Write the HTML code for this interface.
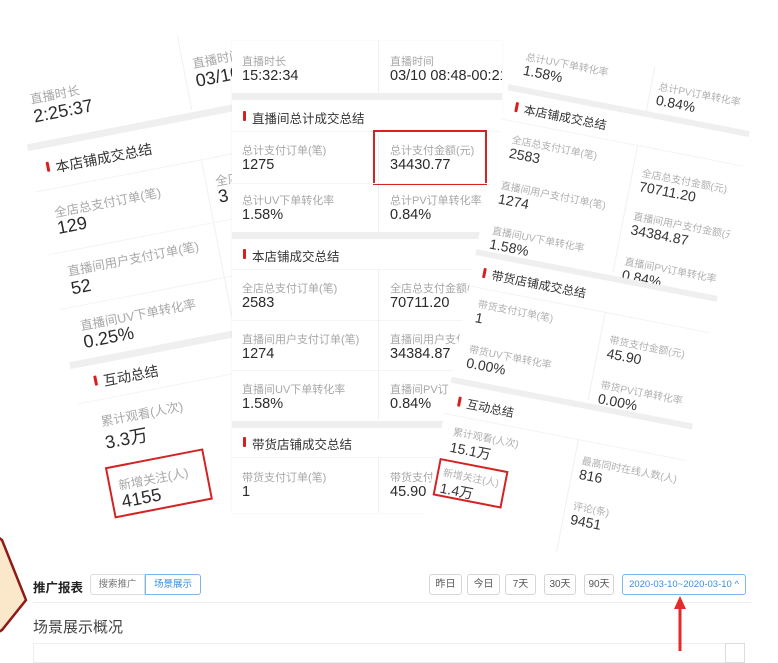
<!DOCTYPE html>
<html><head><meta charset="utf-8"><style>
*{margin:0;padding:0;box-sizing:border-box}
body{width:778px;height:651px;overflow:hidden;background:#fff;font-family:"Liberation Sans","Noto Sans CJK SC",sans-serif;position:relative}
.card{position:absolute;background:#fff;overflow:hidden}
.card *{position:absolute;white-space:nowrap}
.l{color:#a8a8a8;font-size:11px}
.v{color:#2a2a2a;font-size:14.5px}
.h{color:#333;font-size:12.5px}
.h:before{content:"";position:absolute;left:-9px;top:3px;width:3px;height:10px;background:#d81e1e;border-radius:1px}
.bar{background:#efefef;height:7px;left:0;right:0}
.vl{background:#f0f0f0;width:1px}
.hl{background:#f4f4f4;height:1px}
.rb{border:2px solid #d42323}
.big .l{font-size:12.5px}
.big .v{font-size:18px}
.big .h{font-size:14px}
.sm .l{font-size:10px;color:#b0b0b0}
.sm .v{font-size:14px;color:#333}
.sm .h{font-size:12px}
.btn{position:absolute;top:574px;height:21px;border:1px solid #d6d6d6;border-radius:3px;font-size:10px;color:#555;text-align:center;line-height:19px}
</style></head><body>

<!-- left card -->
<div class="card big" style="left:10px;top:58px;width:262px;height:480px;transform:rotate(-11deg);transform-origin:0 0">
  <div class="l" style="left:12px;top:34px">直播时长</div>
  <div class="v" style="left:12px;top:52px">2:25:37</div>
  <div class="vl" style="left:168px;top:10px;height:75px"></div>
  <div class="l" style="left:178px;top:30px">直播时间</div>
  <div class="v" style="left:178px;top:48px">03/10 08:48</div>
  <div class="bar" style="top:88px"></div>
  <div class="h" style="left:24px;top:106px">本店铺成交总结</div>
  <div class="hl" style="left:0;right:0;top:136px"></div>
  <div class="vl" style="left:168px;top:136px;height:170px"></div>
  <div class="l" style="left:14px;top:150px">全店总支付订单(笔)</div>
  <div class="v" style="left:14px;top:166px">129</div>
  <div class="l" style="left:178px;top:150px">全店总支付金额</div>
  <div class="v" style="left:178px;top:166px">3</div>
  <div class="l" style="left:16px;top:210px">直播间用户支付订单(笔)</div>
  <div class="v" style="left:16px;top:228px">52</div>
  <div class="hl" style="left:0;right:0;top:200px"></div>
  <div class="hl" style="left:0;right:0;top:256px"></div>
  <div class="l" style="left:18px;top:266px">直播间UV下单转化率</div>
  <div class="v" style="left:18px;top:283px">0.25%</div>
  <div class="bar" style="top:310px"></div>
  <div class="h" style="left:30px;top:325px">互动总结</div>
  <div class="hl" style="left:0;right:0;top:352px"></div>
  <div class="l" style="left:20px;top:364px">累计观看(人次)</div>
  <div class="v" style="left:20px;top:382px">3.3万</div>
  <div class="rb" style="left:15px;top:420px;width:100px;height:52px"></div>
  <div class="l" style="left:25px;top:430px">新增关注(人)</div>
  <div class="v" style="left:25px;top:447px">4155</div>
</div>

<!-- middle card -->
<div class="card" style="left:232px;top:41px;width:270px;height:472px;box-shadow:0 0 3px rgba(0,0,0,.05)">
  <div class="l" style="left:10px;top:12px">直播时长</div>
  <div class="v" style="left:10px;top:27px">15:32:34</div>
  <div class="vl" style="left:146px;top:0;height:52px"></div>
  <div class="l" style="left:158px;top:12px">直播时间</div>
  <div class="v" style="left:158px;top:27px">03/10 08:48-00:21</div>
  <div class="bar" style="top:52px"></div>
  <div class="h" style="left:20px;top:67px">直播间总计成交总结</div>
  <div class="hl" style="left:0;right:0;top:90px"></div>
  <div class="vl" style="left:146px;top:90px;height:100px"></div>
  <div class="l" style="left:10px;top:101px">总计支付订单(笔)</div>
  <div class="v" style="left:10px;top:116px">1275</div>
  <div class="l" style="left:158px;top:101px">总计支付金额(元)</div>
  <div class="v" style="left:158px;top:116px">34430.77</div>
  <div class="rb" style="left:141px;top:89px;width:114px;height:55px"></div>
  <div class="hl" style="left:0;right:0;top:142px"></div>
  <div class="l" style="left:10px;top:151px">总计UV下单转化率</div>
  <div class="v" style="left:10px;top:166px">1.58%</div>
  <div class="l" style="left:158px;top:151px">总计PV订单转化率</div>
  <div class="v" style="left:158px;top:166px">0.84%</div>
  <div class="bar" style="top:191px"></div>
  <div class="h" style="left:20px;top:205px">本店铺成交总结</div>
  <div class="hl" style="left:0;right:0;top:228px"></div>
  <div class="vl" style="left:146px;top:228px;height:150px"></div>
  <div class="l" style="left:10px;top:239px">全店总支付订单(笔)</div>
  <div class="v" style="left:10px;top:254px">2583</div>
  <div class="l" style="left:158px;top:239px">全店总支付金额(元)</div>
  <div class="v" style="left:158px;top:254px">70711.20</div>
  <div class="hl" style="left:0;right:0;top:279px"></div>
  <div class="l" style="left:10px;top:290px">直播间用户支付订单(笔)</div>
  <div class="v" style="left:10px;top:305px">1274</div>
  <div class="l" style="left:158px;top:290px">直播间用户支付</div>
  <div class="v" style="left:158px;top:305px">34384.87</div>
  <div class="hl" style="left:0;right:0;top:329px"></div>
  <div class="l" style="left:10px;top:340px">直播间UV下单转化率</div>
  <div class="v" style="left:10px;top:355px">1.58%</div>
  <div class="l" style="left:158px;top:340px">直播间PV订单</div>
  <div class="v" style="left:158px;top:355px">0.84%</div>
  <div class="bar" style="top:380px"></div>
  <div class="h" style="left:20px;top:393px">带货店铺成交总结</div>
  <div class="hl" style="left:0;right:0;top:416px"></div>
  <div class="vl" style="left:146px;top:416px;height:60px"></div>
  <div class="l" style="left:10px;top:428px">带货支付订单(笔)</div>
  <div class="v" style="left:10px;top:443px">1</div>
  <div class="l" style="left:158px;top:428px">带货支付</div>
  <div class="v" style="left:158px;top:443px">45.90</div>
</div>

<!-- right card -->
<div class="card sm" style="left:517px;top:40px;width:246px;height:510px;transform:rotate(11deg);transform-origin:0 0">
  <div class="l" style="left:12px;top:6px">总计UV下单转化率</div>
  <div class="v" style="left:12px;top:20px">1.58%</div>
  <div class="vl" style="left:140px;top:0;height:45px"></div>
  <div class="l" style="left:148px;top:10px">总计PV订单转化率</div>
  <div class="v" style="left:148px;top:24px">0.84%</div>
  <div class="bar" style="top:45px;height:6px"></div>
  <div class="h" style="left:20px;top:58px">本店铺成交总结</div>
  <div class="hl" style="left:0;right:0;top:80px"></div>
  <div class="vl" style="left:138px;top:80px;height:130px"></div>
  <div class="l" style="left:14px;top:90px">全店总支付订单(笔)</div>
  <div class="v" style="left:14px;top:104px">2583</div>
  <div class="l" style="left:148px;top:98px">全店总支付金额(元)</div>
  <div class="v" style="left:148px;top:112px">70711.20</div>
  <div class="l" style="left:12px;top:137px">直播间用户支付订单(笔)</div>
  <div class="v" style="left:12px;top:151px">1274</div>
  <div class="l" style="left:148px;top:142px">直播间用户支付金额(元)</div>
  <div class="v" style="left:148px;top:156px">34384.87</div>
  <div class="l" style="left:12px;top:183px">直播间UV下单转化率</div>
  <div class="v" style="left:12px;top:197px">1.58%</div>
  <div class="l" style="left:148px;top:188px">直播间PV订单转化率</div>
  <div class="v" style="left:148px;top:202px">0.84%</div>
  <div class="bar" style="top:213px;height:6px"></div>
  <div class="h" style="left:20px;top:227px">带货店铺成交总结</div>
  <div class="hl" style="left:0;right:0;top:250px"></div>
  <div class="vl" style="left:138px;top:250px;height:90px"></div>
  <div class="l" style="left:12px;top:258px">带货支付订单(笔)</div>
  <div class="v" style="left:12px;top:272px">1</div>
  <div class="l" style="left:148px;top:268px">带货支付金额(元)</div>
  <div class="v" style="left:148px;top:282px">45.90</div>
  <div class="l" style="left:12px;top:304px">带货UV下单转化率</div>
  <div class="v" style="left:12px;top:318px">0.00%</div>
  <div class="l" style="left:148px;top:314px">带货PV订单转化率</div>
  <div class="v" style="left:148px;top:328px">0.00%</div>
  <div class="bar" style="top:343px;height:6px"></div>
  <div class="h" style="left:20px;top:358px">互动总结</div>
  <div class="hl" style="left:0;right:0;top:380px"></div>
  <div class="vl" style="left:136px;top:380px;height:130px"></div>
  <div class="l" style="left:12px;top:388px">累计观看(人次)</div>
  <div class="v" style="left:12px;top:402px">15.1万</div>
  <div class="l" style="left:144px;top:392px">最高同时在线人数(人)</div>
  <div class="v" style="left:144px;top:406px">816</div>
  <div class="rb" style="left:4px;top:425px;width:70px;height:38px"></div>
  <div class="l" style="left:10px;top:430px">新增关注(人)</div>
  <div class="v" style="left:10px;top:444px">1.4万</div>
  <div class="l" style="left:144px;top:438px">评论(条)</div>
  <div class="v" style="left:144px;top:452px">9451</div>
</div>

<!-- bottom section -->
<div style="position:absolute;left:0;top:552px;width:778px;height:99px;background:#fff"></div>
<svg style="position:absolute;left:0;top:530px" width="40" height="110"><polygon points="-5,5 2,10 26,70 2,100 -5,104" fill="#fbe7c9" stroke="#8e1b16" stroke-width="2.5"/></svg>
<div style="position:absolute;left:33px;top:577px;font-size:12.5px;font-weight:bold;color:#222">推广报表</div>
<div style="position:absolute;left:90px;top:574px;width:55px;height:21px;border:1px solid #ddd;border-radius:3px 0 0 3px;font-size:9.5px;color:#777;text-align:center;line-height:19px">搜索推广</div>
<div style="position:absolute;left:145px;top:574px;width:56px;height:21px;border:1px solid #7bb6ee;border-radius:0 3px 3px 0;font-size:9.5px;color:#3a8ee0;text-align:center;line-height:19px">场景展示</div>
<div class="btn" style="left:429px;width:33px">昨日</div>
<div class="btn" style="left:467px;width:33px">今日</div>
<div class="btn" style="left:505px;width:31px">7天</div>
<div class="btn" style="left:544px;width:32px">30天</div>
<div class="btn" style="left:584px;width:30px">90天</div>
<div class="btn" style="left:622px;width:124px;border-color:#7bb6ee;color:#3a8ee0;font-size:9.5px">2020-03-10~2020-03-10 ^</div>
<div style="position:absolute;left:33px;top:602px;width:718px;height:1px;background:#eee"></div>
<div style="position:absolute;left:33px;top:616px;font-size:15px;color:#444">场景展示概况</div>
<div style="position:absolute;left:33px;top:643px;width:712px;height:20px;border:1px solid #eee"></div>
<div style="position:absolute;left:725px;top:643px;width:20px;height:20px;border:1px solid #ddd"></div>
<svg style="position:absolute;left:670px;top:594px" width="20" height="57"><line x1="10" y1="12" x2="10" y2="57" stroke="#e52a2a" stroke-width="3"/><polygon points="10,2 4,15 16,15" fill="#e52a2a"/></svg>
</body></html>
